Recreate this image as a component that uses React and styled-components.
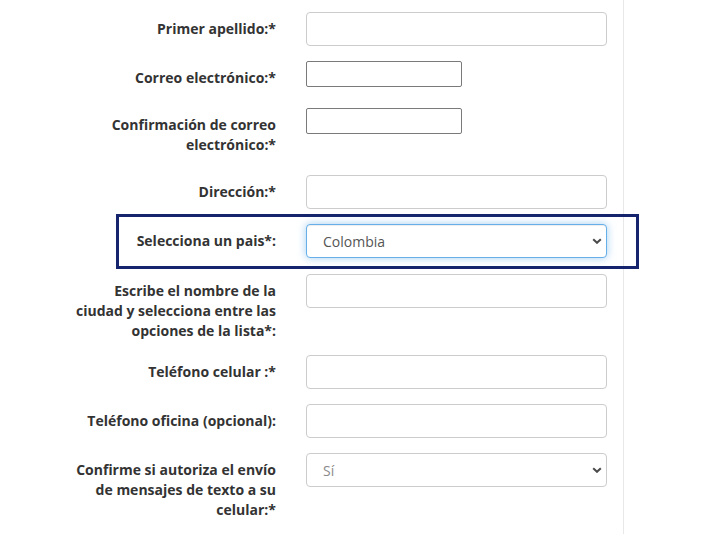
import React from "react";
import styled, { createGlobalStyle } from "styled-components";

const GlobalStyle = createGlobalStyle`
  html, body {
    margin: 0;
    padding: 0;
    background: #ffffff;
  }
  body {
    font-family: "Open Sans", "Noto Sans", sans-serif;
    color: #333333;
  }
`;

const Page = styled.div`
  width: 624px;
  min-height: 534px;
  border-right: 1px solid #e8e8e8;
  box-sizing: border-box;
  padding: 12px 0 0 71px;
`;

const Row = styled.div`
  position: relative;
  display: grid;
  width: 536px;
  grid-template-columns: 205px 301px;
  column-gap: 30px;
  align-items: start;
  margin-bottom: ${(p) => p.$gap ?? 15}px;
`;

const Label = styled.label`
  padding-top: 7px;
  text-align: right;
  font-size: 14px;
  font-weight: 700;
  line-height: 20px;
  color: #333333;
`;

const Input = styled.input`
  display: block;
  box-sizing: border-box;
  width: 100%;
  height: 34px;
  padding: 6px 12px;
  border: 1px solid #cccccc;
  border-radius: 4px;
  background: #fff;
  font: inherit;
  font-size: 14px;
  outline: none;
`;

const PlainInput = styled.input`
  display: block;
  box-sizing: border-box;
  width: 156px;
  height: 26px;
  padding: 2px 4px;
  border: 1px solid #7a7a7a;
  border-radius: 2px;
  background: #fff;
  font: inherit;
  font-size: 13px;
  outline: none;
`;

const SelectWrap = styled.div`
  position: relative;
  height: 34px;
`;

const Select = styled.select`
  appearance: none;
  -webkit-appearance: none;
  box-sizing: border-box;
  width: 100%;
  height: 34px;
  padding: 0 30px 0 16px;
  border: 1px solid ${(p) => (p.$focused ? "#66afe9" : "#cccccc")};
  border-radius: 4px;
  background: #fff;
  box-shadow: ${(p) =>
    p.$focused
      ? "inset 0 1px 1px rgba(0,0,0,.075), 0 0 8px rgba(102,175,233,.6)"
      : "none"};
  font-family: "Open Sans", "Noto Sans", sans-serif;
  font-size: 14px;
  color: ${(p) => (p.$muted ? "#8a8a8a" : "#555555")};
  outline: none;
`;

const Chevron = styled.svg`
  position: absolute;
  right: 5px;
  top: 14px;
  pointer-events: none;
`;

const Highlight = styled.div`
  position: absolute;
  top: -10px;
  bottom: -11px;
  left: 45px;
  right: -32px;
  border: 3px solid #15246c;
  pointer-events: none;
`;

const Arrow = () => (
  <Chevron width="10" height="6" viewBox="0 0 10 6">
    <path d="M1.2 1.2l3.8 3.6 3.8-3.6" fill="none" stroke="#4a4a4a" strokeWidth="2" />
  </Chevron>
);

const Dropdown = ({ value, focused, muted }) => (
  <SelectWrap>
    <Select defaultValue={value} $focused={focused} $muted={muted}>
      <option>{value}</option>
    </Select>
    <Arrow />
  </SelectWrap>
);

export default function App() {
  return (
    <Page>
      <GlobalStyle />
      <Row>
        <Label>Primer apellido:*</Label>
        <Input />
      </Row>
      <Row $gap={20}>
        <Label>Correo electrónico:*</Label>
        <PlainInput />
      </Row>
      <Row $gap={20}>
        <Label>Confirmación de correo electrónico:*</Label>
        <PlainInput />
      </Row>
      <Row>
        <Label>Dirección:*</Label>
        <Input />
      </Row>
      <Row $gap={16}>
        <Highlight />
        <Label>Selecciona un pais*:</Label>
        <Dropdown value="Colombia" focused />
      </Row>
      <Row $gap={14}>
        <Label>Escribe el nombre de la ciudad y selecciona entre las opciones de la lista*:</Label>
        <Input />
      </Row>
      <Row>
        <Label>Teléfono celular :*</Label>
        <Input />
      </Row>
      <Row>
        <Label>Teléfono oficina (opcional):</Label>
        <Input />
      </Row>
      <Row>
        <Label>Confirme si autoriza el envío de mensajes de texto a su celular:*</Label>
        <Dropdown value="Sí" muted />
      </Row>
    </Page>
  );
}
